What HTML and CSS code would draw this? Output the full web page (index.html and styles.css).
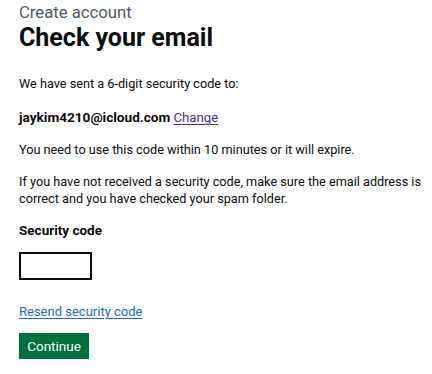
FILE: index.html
```html
<!DOCTYPE html>
<html lang="en">
<head>
<meta charset="utf-8">
<title>Check your email</title>
<link rel="stylesheet" href="styles.css">
</head>
<body>
<main class="page">
  <span class="caption">Create account</span>
  <h1 class="heading">Check your email</h1>
  <p class="body first">We have sent a 6-digit security code to:</p>
  <p class="body"><strong class="email">jaykim4210@icloud.com</strong> <a href="#" class="link link-visited">Change</a></p>
  <p class="body">You need to use this code within 10 minutes or it will expire.</p>
  <p class="body">If you have not received a security code, make sure the email address is correct and you have checked your spam folder.</p>
  <div class="form-group">
    <label class="label" for="code">Security code</label>
    <input class="input" id="code" type="text">
  </div>
  <p class="body resend"><a href="#" class="link">Resend security code</a></p>
  <button class="button" type="button">Continue</button>
</main>
</body>
</html>
```
FILE: styles.css
```css
* { box-sizing: border-box; }
html, body { margin: 0; padding: 0; background: #fff; }
body {
  font-family: Roboto, "Liberation Sans", sans-serif;
  color: #0b0c0c;
}
.page {
  padding: 3px 0 0 19px;
  display: flex;
  flex-direction: column;
  align-items: flex-start;
}
.caption {
  display: block;
  font-size: 16.7px;
  line-height: 20px;
  color: #505a5f;
}
.heading {
  margin: 0 0 22px 0;
  font-size: 25px;
  line-height: 30px;
  font-weight: 700;
}
.body {
  margin: 0 0 15px 0;
  font-size: 12.7px;
  line-height: 17px;
}
.first { margin-bottom: 17px; }
.email { font-weight: 700; font-size: 13.6px; }
.link { color: #1d70b8; text-decoration: underline; text-underline-offset: 2px; text-decoration-thickness: 1px; }
.link-visited { color: #4c2c92; font-size: 13.2px; }
.form-group { display: flex; flex-direction: column; align-items: flex-start; margin: 0; }
.label { font-size: 13.5px; line-height: 17px; font-weight: 700; margin-bottom: 13px; }
.input {
  width: 73px;
  height: 28px;
  border: 2px solid #0b0c0c;
  border-radius: 0;
  background: #fff;
  margin: 0 0 23px 0;
}
.resend { margin-bottom: 13px; }
.resend .link { font-size: 13px; }
.button {
  font-family: inherit;
  font-size: 13.5px;
  line-height: 17px;
  color: #fff;
  background: #00703c;
  border: 0;
  border-radius: 0;
  box-shadow: 0 2px 0 #002d18;
  width: 70px;
  height: 26px;
  padding: 0;
}
```
